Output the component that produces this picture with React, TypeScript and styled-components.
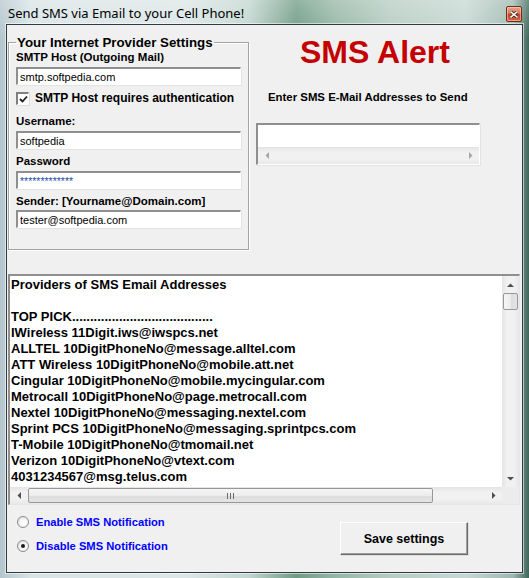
import React from 'react';
import styled, { createGlobalStyle } from 'styled-components';

const GlobalStyle = createGlobalStyle`
  html, body {
    margin: 0;
    padding: 0;
    overflow: hidden;
    background: #ffffff;
  }
  body {
    font-family: 'Liberation Sans', Arial, sans-serif;
  }
`;

const Window = styled.div`
  width: 529px;
  height: 578px;
  box-sizing: border-box;
  padding: 0 6px 5px 6px;
  display: flex;
  flex-direction: column;
  background:
    linear-gradient(180deg, rgba(255, 255, 255, 0.25) 0%, rgba(255, 255, 255, 0) 40px),
    linear-gradient(90deg, #b4c6cd 0%, #d9e4e6 6%, #dce6e6 35%, #c2d6cf 47%, #6f9b84 56%, #93b6a4 63%, #b7cdc3 74%, #c7d8d2 88%, #9fb7b0 97%, #3f6658 100%);
`;

const TitleBar = styled.div`
  height: 24px;
  flex: none;
  display: flex;
  align-items: center;
  padding-left: 2px;
`;

const Title = styled.span`
  flex: 1;
  font-family: 'Noto Sans', 'Open Sans', sans-serif;
  font-size: 13px;
  color: #000;
  padding-top: 2px;
`;

const CloseButton = styled.div`
  width: 16px;
  height: 16px;
  box-sizing: border-box;
  margin-right: 1px;
  margin-top: 4px;
  border: 1px solid #6a2f22;
  border-radius: 2px;
  background: linear-gradient(180deg, #eba58c 0%, #d9765a 45%, #c2421f 55%, #d8664a 100%);
  box-shadow: inset 0 0 0 1px rgba(255, 220, 200, 0.5);
  display: flex;
  align-items: center;
  justify-content: center;
`;

const Client = styled.div`
  flex: 1;
  display: flex;
  flex-direction: column;
  background: #f0f0f0;
  border: 1px solid #2f3b40;
  box-shadow: 0 0 0 1px rgba(255, 255, 255, 0.55);
`;

const TopRow = styled.div`
  display: grid;
  grid-template-columns: 241px 1fr;
  padding-left: 1px;
`;

const GroupBox = styled.fieldset`
  margin: 10px 0 0 0;
  padding: 0 7px 21px 7px;
  min-width: 0;
  border: 1px solid #a3a3a3;
  box-shadow: inset 1px 1px 0 #ffffff, 1px 1px 0 #ffffff;
  display: flex;
  flex-direction: column;
`;

const Legend = styled.legend`
  padding: 0 1px;
  font-size: 13.3px;
  line-height: 15px;
  font-weight: bold;
  color: #000;
`;

const FieldLabel = styled.div<{ $gap: number }>`
  margin-top: ${(p) => p.$gap}px;
  font-size: 11.5px;
  line-height: 14px;
  font-weight: bold;
  color: #000;
  white-space: nowrap;
`;

const TextInput = styled.input<{ $gap?: number; $secret?: boolean }>`
  display: block;
  width: 100%;
  height: 18px;
  box-sizing: border-box;
  margin: ${(p) => p.$gap ?? 3}px 0 0 0;
  padding: 0 0 0 2px;
  border-style: solid;
  border-width: 2px 1px 1px 2px;
  border-color: #8f8f8f #ffffff #ffffff #8f8f8f;
  box-shadow: 1px 1px 0 #e3e3e3;
  background: #ffffff;
  font-family: 'Liberation Sans', Arial, sans-serif;
  font-size: ${(p) => (p.$secret ? 10.5 : 11)}px;
  color: ${(p) => (p.$secret ? '#1f4fa8' : '#000')};
  outline: none;
`;

const CheckRow = styled.label`
  margin-top: 6px;
  height: 14px;
  display: flex;
  align-items: center;
  gap: 6px;
  font-size: 12px;
  font-weight: bold;
  color: #000;
  white-space: nowrap;
`;

const CheckBox = styled.span`
  width: 13px;
  height: 13px;
  box-sizing: border-box;
  border-style: solid;
  border-width: 2px 1px 1px 2px;
  border-color: #7f7f7f #ffffff #ffffff #7f7f7f;
  box-shadow: 1px 1px 0 #dcdcdc;
  background: #ffffff;
  display: flex;
  align-items: center;
  justify-content: center;
`;

const RightPane = styled.div`
  display: flex;
  flex-direction: column;
  padding-left: 7px;
`;

const Headline = styled.div`
  margin: 9px 0 0 44px;
  font-size: 32px;
  line-height: 37px;
  font-weight: bold;
  color: #c40000;
`;

const Prompt = styled.div`
  margin: 20px 0 0 12px;
  font-size: 11.4px;
  line-height: 13px;
  font-weight: bold;
  color: #000;
  white-space: nowrap;
`;

const AddressBox = styled.div`
  margin-top: 19px;
  width: 224px;
  height: 42px;
  box-sizing: border-box;
  border-style: solid;
  border-width: 2px 1px 1px 2px;
  border-color: #8f8f8f #ffffff #ffffff #8f8f8f;
  box-shadow: 1px 1px 0 #e3e3e3;
  background: #ffffff;
  display: flex;
  flex-direction: column;
  justify-content: flex-end;
`;

const ProvidersBox = styled.div`
  margin: 24px 2px 0 1px;
  height: 231px;
  box-sizing: border-box;
  border-style: solid;
  border-width: 2px 1px 1px 2px;
  border-color: #8f8f8f #e6e6e6 #e6e6e6 #8f8f8f;
  display: grid;
  grid-template-columns: 1fr 17px;
  grid-template-rows: 1fr 17px;
`;

const ProvidersText = styled.div`
  background: #ffffff;
  padding: 1px 0 0 1px;
  overflow: hidden;
  white-space: pre;
  font-size: 13px;
  line-height: 16px;
  font-weight: bold;
  color: #000;
`;

const Corner = styled.div`
  background: #ececec;
`;

const HBar = styled.div`
  display: flex;
  align-items: center;
  height: 17px;
  background: linear-gradient(180deg, #e4e4e4 0%, #f1f1f1 30%, #f1f1f1 70%, #e8e8e8 100%);
`;

const VBar = styled.div`
  display: flex;
  flex-direction: column;
  align-items: center;
  width: 17px;
  background: linear-gradient(90deg, #e4e4e4 0%, #f1f1f1 30%, #f1f1f1 70%, #e8e8e8 100%);
`;

const ArrowCell = styled.div`
  width: 17px;
  height: 17px;
  flex: none;
  display: flex;
  align-items: center;
  justify-content: center;
`;

const Track = styled.div`
  flex: 1;
`;

const HThumb = styled.div<{ $size: number }>`
  width: ${(p) => p.$size}px;
  height: 15px;
  flex: none;
  margin-left: 1px;
  box-sizing: border-box;
  border: 1px solid #989898;
  border-radius: 2px;
  background: linear-gradient(180deg, #f6f6f6 0%, #ececec 50%, #dcdcdc 51%, #e4e4e4 100%);
  display: flex;
  align-items: center;
  justify-content: center;
`;

const VThumb = styled.div<{ $size: number }>`
  height: ${(p) => p.$size}px;
  width: 15px;
  flex: none;
  box-sizing: border-box;
  border: 1px solid #989898;
  border-radius: 2px;
  background: linear-gradient(90deg, #f6f6f6 0%, #ececec 50%, #dcdcdc 51%, #e4e4e4 100%);
`;

const BottomRow = styled.div`
  display: flex;
  align-items: flex-start;
  padding: 9px 54px 0 10px;
`;

const RadioGroup = styled.div`
  display: flex;
  flex-direction: column;
  gap: 8px;
`;

const RadioRow = styled.label`
  height: 16px;
  display: flex;
  align-items: center;
  gap: 7px;
  font-size: 11.2px;
  font-weight: bold;
  color: #0000ff;
  white-space: nowrap;
`;

const RadioDot = styled.span<{ $on: boolean }>`
  width: 12px;
  height: 12px;
  box-sizing: border-box;
  border-radius: 50%;
  border: 1px solid #8a8a8a;
  background: radial-gradient(circle at 60% 60%, #ffffff 0%, #f3f3f3 50%, #cfcfcf 100%);
  display: flex;
  align-items: center;
  justify-content: center;

  &::after {
    content: '';
    display: ${(p) => (p.$on ? 'block' : 'none')};
    width: 4px;
    height: 4px;
    border-radius: 50%;
    background: #1a1a1a;
  }
`;

const SaveButton = styled.button`
  margin: 8px 0 0 auto;
  width: 128px;
  height: 33px;
  box-sizing: border-box;
  border-style: solid;
  border-width: 1px;
  border-color: #ffffff #6a6a6a #6a6a6a #ffffff;
  box-shadow: inset -1px -1px 0 #a0a0a0, 1px 1px 0 #e0e0e0;
  background: #f0f0f0;
  font-family: 'Liberation Sans', Arial, sans-serif;
  font-size: 12.5px;
  font-weight: bold;
  color: #000;
  padding: 0;
`;

type Dir = 'up' | 'down' | 'left' | 'right';

const arrowPoints: Record<Dir, string> = {
  up: '0,4 3.5,0.5 7,4',
  down: '0,0 7,0 3.5,3.5',
  left: '4,0 4,7 0.5,3.5',
  right: '0,0 0,7 3.5,3.5',
};

function Arrow({ dir, faded }: { dir: Dir; faded?: boolean }) {
  const flat = dir === 'up' || dir === 'down';
  return (
    <ArrowCell>
      <svg width={flat ? 7 : 4} height={flat ? 4 : 7} viewBox={flat ? '0 0 7 4' : '0 0 4 7'}>
        <polygon points={arrowPoints[dir]} fill={faded ? '#a6a6a6' : '#4e4e4e'} />
      </svg>
    </ArrowCell>
  );
}

const providers = [
  'Providers of SMS Email Addresses',
  '',
  'TOP PICK.......................................',
  'IWireless 11Digit.iws@iwspcs.net',
  'ALLTEL 10DigitPhoneNo@message.alltel.com',
  'ATT Wireless 10DigitPhoneNo@mobile.att.net',
  'Cingular 10DigitPhoneNo@mobile.mycingular.com',
  'Metrocall 10DigitPhoneNo@page.metrocall.com',
  'Nextel 10DigitPhoneNo@messaging.nextel.com',
  'Sprint PCS 10DigitPhoneNo@messaging.sprintpcs.com',
  'T-Mobile 10DigitPhoneNo@tmomail.net',
  'Verizon 10DigitPhoneNo@vtext.com',
  '4031234567@msg.telus.com',
];

export default function App() {
  return (
    <>
      <GlobalStyle />
      <Window>
        <TitleBar>
          <Title>Send SMS via Email to your Cell Phone!</Title>
          <CloseButton>
            <svg width="8" height="7" viewBox="0 0 8 7">
              <path d="M1 1 L7 6 M7 1 L1 6" stroke="#3a1a14" strokeWidth="3" strokeLinecap="square" />
              <path d="M1 1 L7 6 M7 1 L1 6" stroke="#ffffff" strokeWidth="1.6" strokeLinecap="square" />
            </svg>
          </CloseButton>
        </TitleBar>
        <Client>
          <TopRow>
            <GroupBox>
              <Legend>Your Internet Provider Settings</Legend>
              <FieldLabel $gap={0}>SMTP Host (Outgoing Mail)</FieldLabel>
              <TextInput readOnly value="smtp.softpedia.com" />
              <CheckRow>
                <CheckBox>
                  <svg width="9" height="8" viewBox="0 0 9 8">
                    <path d="M1 4 L3.5 6.5 L8 1.5" stroke="#1c1c1c" strokeWidth="1.8" fill="none" />
                  </svg>
                </CheckBox>
                SMTP Host requires authentication
              </CheckRow>
              <FieldLabel $gap={9}>Username:</FieldLabel>
              <TextInput readOnly value="softpedia" />
              <FieldLabel $gap={5}>Password</FieldLabel>
              <TextInput readOnly $secret value="*************" />
              <FieldLabel $gap={5}>Sender: [Yourname@Domain.com]</FieldLabel>
              <TextInput readOnly $gap={2} value="tester@softpedia.com" />
            </GroupBox>
            <RightPane>
              <Headline>SMS Alert</Headline>
              <Prompt>Enter SMS E-Mail Addresses to Send</Prompt>
              <AddressBox>
                <HBar>
                  <Arrow dir="left" faded />
                  <Track />
                  <Arrow dir="right" faded />
                </HBar>
              </AddressBox>
            </RightPane>
          </TopRow>

          <ProvidersBox>
            <ProvidersText>{providers.join('\n')}</ProvidersText>
            <VBar>
              <Arrow dir="up" />
              <VThumb $size={17} />
              <Track />
              <Arrow dir="down" />
            </VBar>
            <HBar>
              <Arrow dir="left" />
              <HThumb $size={405}>
                <svg width="7" height="6" viewBox="0 0 7 6">
                  <path d="M0.5 0 V6 M3.5 0 V6 M6.5 0 V6" stroke="#6a6a6a" strokeWidth="1" />
                </svg>
              </HThumb>
              <Track />
              <Arrow dir="right" />
            </HBar>
            <Corner />
          </ProvidersBox>

          <BottomRow>
            <RadioGroup>
              <RadioRow>
                <RadioDot $on={false} />
                Enable SMS Notification
              </RadioRow>
              <RadioRow>
                <RadioDot $on />
                Disable SMS Notification
              </RadioRow>
            </RadioGroup>
            <SaveButton>Save settings</SaveButton>
          </BottomRow>
        </Client>
      </Window>
    </>
  );
}
